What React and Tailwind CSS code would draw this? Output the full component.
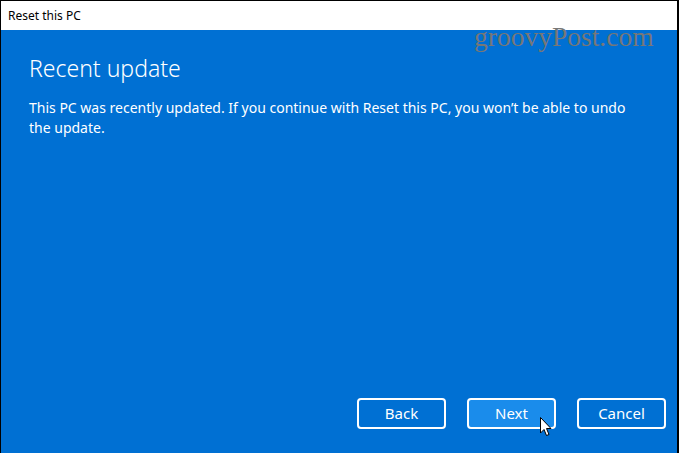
import React from "react";

const font = { fontFamily: '"Noto Sans", "Open Sans", sans-serif' };

function Cursor() {
  return (
    <svg className="absolute left-[540px] top-[417px]" width="12" height="20" viewBox="0 0 12 20">
      <path d="M0.5 0.5 L0.5 16 L4 12.5 L6.5 18.5 L9 17.5 L6.5 11.5 L11 11.5 Z" fill="#ffffff" stroke="#000000" strokeWidth="1" strokeLinejoin="miter" />
    </svg>
  );
}

export default function App() {
  return (
    <div className="relative w-[679px] h-[453px] overflow-hidden bg-black" style={font}>
      <div className="flex flex-col h-full ml-px mr-[2px] mt-px mb-[2px]">
        <div className="h-[29px] bg-white flex items-center pl-[7px] text-[12px] text-black">
          Reset this PC
        </div>
        <div className="flex-1 flex flex-col bg-[#0070d3] text-white px-[28px]">
          <h1 className="mt-[23px] text-[23px] font-light leading-[30px]">Recent update</h1>
          <p className="mt-[15px] text-[14px] leading-[20px]">
            This PC was recently updated. If you continue with Reset this PC, you won’t be able to undo the update.
          </p>
          <div className="mt-auto mb-[25px] flex justify-end gap-[21px] -mr-[17px]">
            <button className="w-[89px] h-[31px] rounded-[4px] border-2 border-white text-[15px]">Back</button>
            <button className="w-[89px] h-[31px] rounded-[4px] border-2 border-white bg-[#1a8ceb] text-[15px]">Next</button>
            <button className="w-[89px] h-[31px] rounded-[4px] border-2 border-white text-[15px]">Cancel</button>
          </div>
        </div>
      </div>
      <div
        className="absolute left-[474px] top-[20px] text-[27.5px] leading-[34px] text-[#777777]"
        style={{ fontFamily: '"Liberation Serif", serif' }}
      >
        groovyPost.com
      </div>
      <Cursor />
    </div>
  );
}
